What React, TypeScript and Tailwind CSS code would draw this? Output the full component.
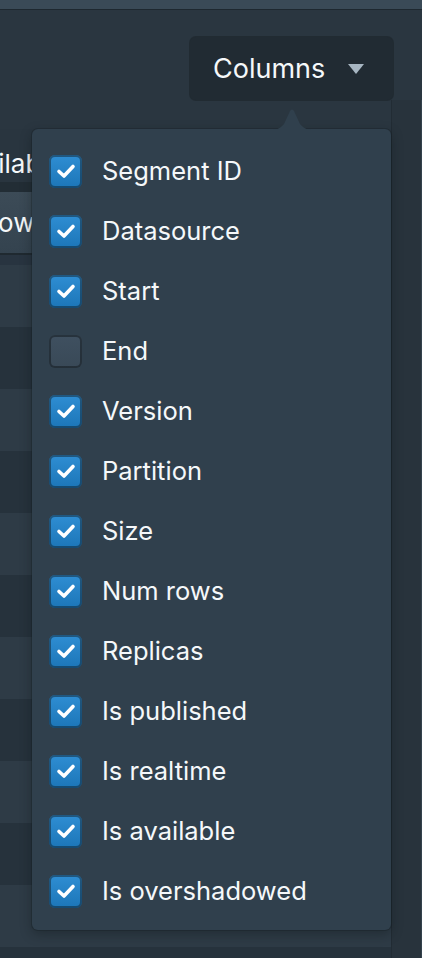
import React from "react";

const items: { label: string; checked: boolean }[] = [
  { label: "Segment ID", checked: true },
  { label: "Datasource", checked: true },
  { label: "Start", checked: true },
  { label: "End", checked: false },
  { label: "Version", checked: true },
  { label: "Partition", checked: true },
  { label: "Size", checked: true },
  { label: "Num rows", checked: true },
  { label: "Replicas", checked: true },
  { label: "Is published", checked: true },
  { label: "Is realtime", checked: true },
  { label: "Is available", checked: true },
  { label: "Is overshadowed", checked: true },
];

function Check({ checked }: { checked: boolean }) {
  if (checked) {
    return (
      <div className="w-[33px] h-[33px] rounded-[6px] flex items-center justify-center bg-gradient-to-b from-[#2f8ed3] to-[#1c76b8] shadow-[inset_0_0_0_2px_rgba(16,22,26,0.45)]">
        <svg width="20" height="16" viewBox="0 0 20 16" fill="none">
          <path d="M3 8.5 L8 13 L17 3.5" stroke="#ffffff" strokeWidth="3.6" strokeLinecap="round" strokeLinejoin="round" />
        </svg>
      </div>
    );
  }
  return (
    <div className="w-[33px] h-[33px] rounded-[6px] bg-gradient-to-b from-[#3f5060] to-[#394957] shadow-[inset_0_0_0_2px_rgba(16,22,26,0.5)]" />
  );
}

export default function App() {
  const rows = Array.from({ length: 12 }, (_, i) => i);
  return (
    <div
      className="relative w-[422px] h-[958px] overflow-hidden bg-[#2a3640] text-[#f5f8fa]"
      style={{ fontFamily: "Inter, 'Noto Sans', sans-serif" }}
    >
      <div className="h-[10px] bg-[#3a4a57] border-b border-[#1e2830]" />
      <div className="flex">
        <div className="w-[391px] flex flex-col">
          <div className="h-[119px] bg-[#2a3640] flex justify-end items-start pt-[27px]">
            <div className="w-[203px] h-[63px] rounded-[6px] bg-[#212b33] shadow-[0_0_0_1px_rgba(16,22,26,0.35)] flex items-center pl-[23px] pr-[29px] mr-[-2px]">
              <span className="text-[27px] leading-none">Columns</span>
              <div className="ml-auto w-0 h-0 border-l-[8px] border-r-[8px] border-t-[10px] border-l-transparent border-r-transparent border-t-[#a7b6c2]" />
            </div>
          </div>
          <div className="h-[53px] bg-[#29353f] overflow-hidden flex items-center">
            <span className="ml-[-47px] text-[26px] leading-none mt-[16px] whitespace-nowrap">Available</span>
          </div>
          <div className="h-[10px] bg-[#222d35]" />
          <div className="h-[61px] bg-gradient-to-b from-[#3c4b57] to-[#34434f] flex items-center overflow-hidden">
            <span className="ml-[-34px] text-[26px] leading-none whitespace-nowrap">Show</span>
          </div>
          <div className="h-[2px] bg-[#1f2930]" />
          <div className="h-[10px] bg-[#283440]" />
          {rows.map((i) => (
            <div
              key={i}
              className={`h-[62px] shrink-0 ${i % 2 === 0 ? "bg-[#2e3b46]" : "bg-[#26323c]"}`}
            />
          ))}
        </div>
        <div className="w-[31px] bg-[#28333c] border-l border-[#222c34] border-r border-r-[#34424d] mt-[90px]" />
      </div>

      {/* popover */}
      <div className="absolute left-[32px] top-[129px] w-[359px]">
        <svg
          className="absolute left-[238px] top-[-20px]"
          width="44"
          height="21"
          viewBox="0 0 44 21"
        >
          <path
            d="M0 21 C8 21 10 19 14 15 L20 2 Q22 -1 24 2 L30 15 C34 19 36 21 44 21 Z"
            fill="#30404d"
          />
        </svg>
        <div className="rounded-[6px] bg-[#30404d] shadow-[0_0_0_1px_rgba(16,22,26,0.25),0_4px_12px_rgba(16,22,26,0.4)] pt-[12px] pb-[9px]">
          {items.map((it) => (
            <div key={it.label} className="h-[60px] flex items-center pl-[17px]">
              <Check checked={it.checked} />
              <span className="ml-[20px] text-[25.5px] leading-none">{it.label}</span>
            </div>
          ))}
        </div>
      </div>
    </div>
  );
}
